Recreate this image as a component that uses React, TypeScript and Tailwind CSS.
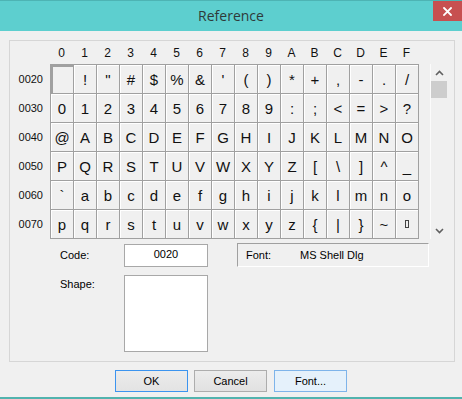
import React from "react";

const rows: { label: string; chars: string[] }[] = [
  { label: "0020", chars: [" ", "!", '"', "#", "$", "%", "&", "'", "(", ")", "*", "+", ",", "-", ".", "/"] },
  { label: "0030", chars: ["0", "1", "2", "3", "4", "5", "6", "7", "8", "9", ":", ";", "<", "=", ">", "?"] },
  { label: "0040", chars: ["@", "A", "B", "C", "D", "E", "F", "G", "H", "I", "J", "K", "L", "M", "N", "O"] },
  { label: "0050", chars: ["P", "Q", "R", "S", "T", "U", "V", "W", "X", "Y", "Z", "[", "\\", "]", "^", "_"] },
  { label: "0060", chars: ["`", "a", "b", "c", "d", "e", "f", "g", "h", "i", "j", "k", "l", "m", "n", "o"] },
  { label: "0070", chars: ["p", "q", "r", "s", "t", "u", "v", "w", "x", "y", "z", "{", "|", "}", "~", "DEL"] },
];

const headers = ["0", "1", "2", "3", "4", "5", "6", "7", "8", "9", "A", "B", "C", "D", "E", "F"];

function Cell({ ch, selected }: { ch: string; selected?: boolean }) {
  return (
    <div
      className={
        "w-[23px] h-[29px] border-r border-b border-[#a0a0a0] flex items-center justify-center text-[15px] text-[#111] leading-none " +
        (selected
          ? "shadow-[inset_1px_1px_0_1px_#a0a0a0]"
          : "shadow-[inset_1px_1px_0_0_#ffffff]")
      }
    >
      {ch === "DEL" ? (
        <span className="inline-block w-[4px] h-[8px] border border-[#444]" />
      ) : (
        <span>{ch}</span>
      )}
    </div>
  );
}

export default function App() {
  return (
    <div
      className="w-[462px] h-[399px] bg-[#f0f0f0] flex flex-col overflow-hidden text-black"
      style={{ fontFamily: '"Liberation Sans", Arial, sans-serif' }}
    >
      {/* Title bar */}
      <div className="relative h-[31px] shrink-0 bg-[#5dcfcf] border-t border-[#4db4b4] flex items-center justify-center">
        <span
          className="text-[14px] text-[#2f3a3a] -mt-[1px]"
          style={{ fontFamily: '"Open Sans", "Noto Sans", sans-serif' }}
        >
          Reference
        </span>
        <div className="absolute top-0 right-0 w-[29px] h-[20px] bg-[#c75050] flex items-center justify-center">
          <svg width="9" height="9" viewBox="0 0 9 9">
            <path d="M1 1 L8 8 M8 1 L1 8" stroke="#ffffff" strokeWidth="1.8" strokeLinecap="square" />
          </svg>
        </div>
      </div>

      {/* Body */}
      <div className="flex-1 flex flex-col px-[9px] pt-[9px]">
        <div className="w-[446px] h-[322px] border border-[#d6d6d6] flex flex-col">
          {/* Header row */}
          <div className="flex mt-[5px] h-[14px] items-center">
            <div className="w-[40px]" />
            {headers.map((h) => (
              <div key={h} className="w-[23px] text-center text-[12px] leading-none text-[#111]">
                {h}
              </div>
            ))}
          </div>

          {/* Grid */}
          <div className="flex mt-[4px]">
            <div className="w-[40px] flex flex-col pt-[1px]">
              {rows.map((r) => (
                <div
                  key={r.label}
                  className="h-[29px] flex items-center justify-end pr-[7px] text-[11px] text-[#111]"
                >
                  {r.label}
                </div>
              ))}
            </div>
            <div className="border-t border-l border-[#a0a0a0] flex flex-col">
              {rows.map((r, ri) => (
                <div key={r.label} className="flex">
                  {r.chars.map((c, ci) => (
                    <Cell key={ci} ch={c} selected={ri === 0 && ci === 0} />
                  ))}
                </div>
              ))}
            </div>
            {/* Scrollbar */}
            <div className="ml-[11px] w-[17px] h-[175px] border-l border-[#fbfbfb] flex flex-col items-stretch">
              <div className="h-[17px] flex items-center justify-center">
                <svg width="9" height="6" viewBox="0 0 9 6">
                  <path d="M1 5 L4.5 1.5 L8 5" fill="none" stroke="#606060" strokeWidth="1.6" />
                </svg>
              </div>
              <div className="h-[17px] bg-[#cdcdcd]" />
              <div className="flex-1" />
              <div className="h-[17px] flex items-center justify-center">
                <svg width="9" height="6" viewBox="0 0 9 6">
                  <path d="M1 1 L4.5 4.5 L8 1" fill="none" stroke="#606060" strokeWidth="1.6" />
                </svg>
              </div>
            </div>
          </div>

          {/* Lower section */}
          <div className="flex mt-[5px] pl-[50px] items-start">
            <div className="flex flex-col">
              <div className="flex items-center h-[23px]">
                <div className="w-[64px] text-[11px]">Code:</div>
                <div className="w-[84px] h-[23px] bg-white border border-[#a8a8a8] flex justify-center pt-[4px] text-[11px] leading-none">
                  0020
                </div>
              </div>
              <div className="flex mt-[8px]">
                <div className="w-[64px] text-[11px] pt-[1px]">Shape:</div>
                <div className="w-[84px] h-[77px] bg-white border border-[#a8a8a8]" />
              </div>
            </div>
            <div className="ml-[29px] -mt-[1px] w-[192px] h-[24px] border-t border-l border-[#a0a0a0] border-r border-b border-r-white border-b-white flex items-center text-[11px]">
              <span className="ml-[8px] w-[54px]">Font:</span>
              <span>MS Shell Dlg</span>
            </div>
          </div>
        </div>

        {/* Buttons */}
        <div className="flex mt-[8px] ml-[106px] text-[11px]">
          <div className="w-[73px] h-[22px] border border-[#3c94ef] bg-gradient-to-b from-[#ececec] to-[#e3e3e3] flex items-center justify-center">
            OK
          </div>
          <div className="ml-[6px] w-[73px] h-[22px] border border-[#adadad] bg-gradient-to-b from-[#ececec] to-[#e1e1e1] flex items-center justify-center">
            Cancel
          </div>
          <div className="ml-[7px] w-[73px] h-[22px] border border-[#7eb4ea] bg-[#e5f1fb] flex items-center justify-center">
            Font...
          </div>
        </div>
      </div>

      <div className="h-[2px] shrink-0 bg-[#52b3ae]" />
    </div>
  );
}
